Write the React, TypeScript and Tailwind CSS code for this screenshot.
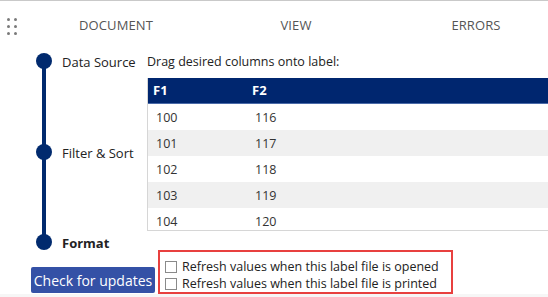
import React from 'react'

const rows = [
  ['100', '116'],
  ['101', '117'],
  ['102', '118'],
  ['103', '119'],
  ['104', '120'],
]

const steps = [
  { label: 'Data Source', bold: false, mt: 'mt-0' },
  { label: 'Filter & Sort', bold: false, mt: 'mt-[69px]' },
  { label: 'Format', bold: true, mt: 'mt-[68px]' },
]

function DragHandle() {
  return (
    <svg width="12" height="18" viewBox="0 0 12 18" className="text-[#7a7a7a]">
      {[0, 7, 14].map((y) =>
        [0, 7].map((x) => (
          <circle key={`${x}-${y}`} cx={x + 1.5} cy={y + 1.5} r="1.5" fill="currentColor" />
        ))
      )}
    </svg>
  )
}

export default function App() {
  return (
    <main
      className="w-[548px] h-[297px] overflow-hidden bg-white border-t border-[#c9c9c9] text-[12.5px] text-[#222]"
      style={{ fontFamily: '"Segoe UI", "Open Sans", "Noto Sans", sans-serif' }}
    >
      {/* Tabs */}
      <div className="flex items-center h-[49px]">
        <div className="pl-[7px] pt-[2px] w-[26px] shrink-0">
          <DragHandle />
        </div>
        <div className="flex shrink-0 text-[13px] text-[#555] tracking-[0.1px]">
          <div className="w-[180px] text-center">DOCUMENT</div>
          <div className="w-[180px] text-center">VIEW</div>
          <div className="w-[180px] text-center">ERRORS</div>
        </div>
      </div>

      {/* Steps + table */}
      <div className="flex h-[200px]">
        <div className="relative w-[147px] shrink-0 flex flex-col pl-[36px]">
          <div className="absolute left-[42px] top-[11px] w-[4px] h-[181px] bg-[#012a6e]" />
          {steps.map((s) => (
            <div key={s.label} className={`relative flex items-center h-[22px] gap-[10px] ${s.mt}`}>
              <span className="w-4 h-4 rounded-full bg-[#012a6e]" />
              <span className={`pt-[3px] text-[13px] ${s.bold ? 'font-bold' : ''}`}>{s.label}</span>
            </div>
          ))}
        </div>

        <div className="flex-1 flex flex-col">
          <div className="h-[22px] flex items-center pt-[3px]">Drag desired columns onto label:</div>
          <div className="mt-[6px] h-[153px] overflow-hidden border-l border-b border-[#d6d6d6]">
            <div className="flex items-center h-[26px] bg-[#00266f] border-b border-[#4a6aa8] text-white font-bold text-[13px] pt-[1px]">
              <div className="w-[99px] pl-[5px]">F1</div>
              <div className="pl-[5px]">F2</div>
            </div>
            {rows.map(([a, b], i) => (
              <div
                key={a}
                className={`flex items-center h-[26px] pt-[3px] text-[#333] ${i % 2 === 1 ? 'bg-[#f0f0f0]' : 'bg-white'}`}
              >
                <div className="w-[99px] pl-[8px]">{a}</div>
                <div className="pl-[8px]">{b}</div>
              </div>
            ))}
          </div>
        </div>
      </div>

      {/* Bottom row */}
      <div className="flex items-end h-[44px]">
        <button className="ml-[31px] mb-[1px] w-[124px] h-[26px] pt-[1px] rounded-[2px] bg-[#3451a6] text-white text-[14px] leading-none">
          Check for updates
        </button>
        <div className="ml-[3px] w-[295px] h-[44px] border-2 border-[#e8403f] flex flex-col justify-end pl-[5px]">
          {['opened', 'printed'].map((w) => (
            <label key={w} className="flex items-center h-[17px] gap-[5px]">
              <span className="w-[12px] h-[12px] border border-[#8a8a8a] bg-white" />
              <span className="pt-[1px]">Refresh values when this label file is {w}</span>
            </label>
          ))}
        </div>
      </div>
      <div className="h-[3px] bg-[#f6f6f6]" />
    </main>
  )
}
